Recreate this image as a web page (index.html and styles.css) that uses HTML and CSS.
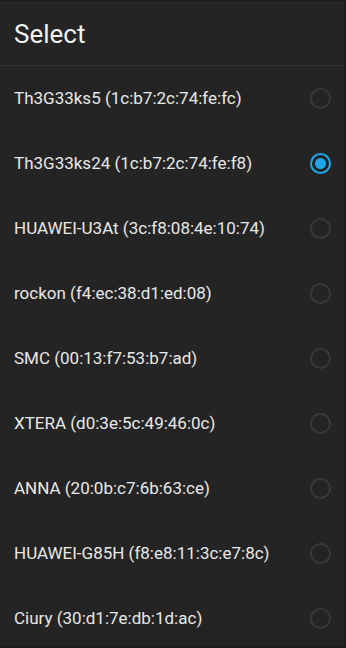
FILE: index.html
```html
<!DOCTYPE html>
<html>
<head>
<meta charset="utf-8">
<link rel="stylesheet" href="styles.css">
</head>
<body>
<div class="dialog">
  <div class="title">Select</div>
  <ul class="list">
    <li class="row"><span class="label">Th3G33ks5 (1c:b7:2c:74:fe:fc)</span><span class="radio"></span></li>
    <li class="row"><span class="label">Th3G33ks24 (1c:b7:2c:74:fe:f8)</span><span class="radio checked"></span></li>
    <li class="row"><span class="label">HUAWEI-U3At (3c:f8:08:4e:10:74)</span><span class="radio"></span></li>
    <li class="row"><span class="label">rockon (f4:ec:38:d1:ed:08)</span><span class="radio"></span></li>
    <li class="row"><span class="label">SMC (00:13:f7:53:b7:ad)</span><span class="radio"></span></li>
    <li class="row"><span class="label">XTERA (d0:3e:5c:49:46:0c)</span><span class="radio"></span></li>
    <li class="row"><span class="label">ANNA (20:0b:c7:6b:63:ce)</span><span class="radio"></span></li>
    <li class="row"><span class="label">HUAWEI-G85H (f8:e8:11:3c:e7:8c)</span><span class="radio"></span></li>
    <li class="row"><span class="label">Ciury (30:d1:7e:db:1d:ac)</span><span class="radio"></span></li>
  </ul>
</div>
</body>
</html>
```

FILE: styles.css
```css
html, body {
  margin: 0;
  padding: 0;
  background: #1c1c1c;
}
body {
  width: 346px;
  height: 648px;
  overflow: hidden;
  font-family: Roboto, "Liberation Sans", sans-serif;
}
.dialog {
  width: 344px;
  height: 645px;
  margin-top: 1px;
  background: #242424;
  display: flex;
  flex-direction: column;
  overflow: hidden;
}
.title {
  flex: none;
  height: 65px;
  box-sizing: border-box;
  border-bottom: 1px solid #2f2f2f;
  padding-left: 14px;
  padding-top: 2px;
  display: flex;
  align-items: center;
  color: #f2f2f2;
  font-size: 26px;
  line-height: 1;
}
.list {
  list-style: none;
  margin: 0;
  padding: 0;
}
.row {
  height: 65px;
  box-sizing: border-box;
  border-bottom: 1px solid #292929;
  display: flex;
  align-items: center;
  justify-content: space-between;
  padding-left: 14px;
  padding-right: 13px;
}
.label {
  color: #e8e8e8;
  font-size: 17px;
}
.radio {
  width: 21px;
  height: 21px;
  box-sizing: border-box;
  border: 2px solid #383838;
  border-radius: 50%;
  display: flex;
  align-items: center;
  justify-content: center;
}
.radio.checked {
  border-color: #1ea8ec;
}
.radio.checked::after {
  content: "";
  width: 11px;
  height: 11px;
  border-radius: 50%;
  background: #1ea8ec;
}
```
